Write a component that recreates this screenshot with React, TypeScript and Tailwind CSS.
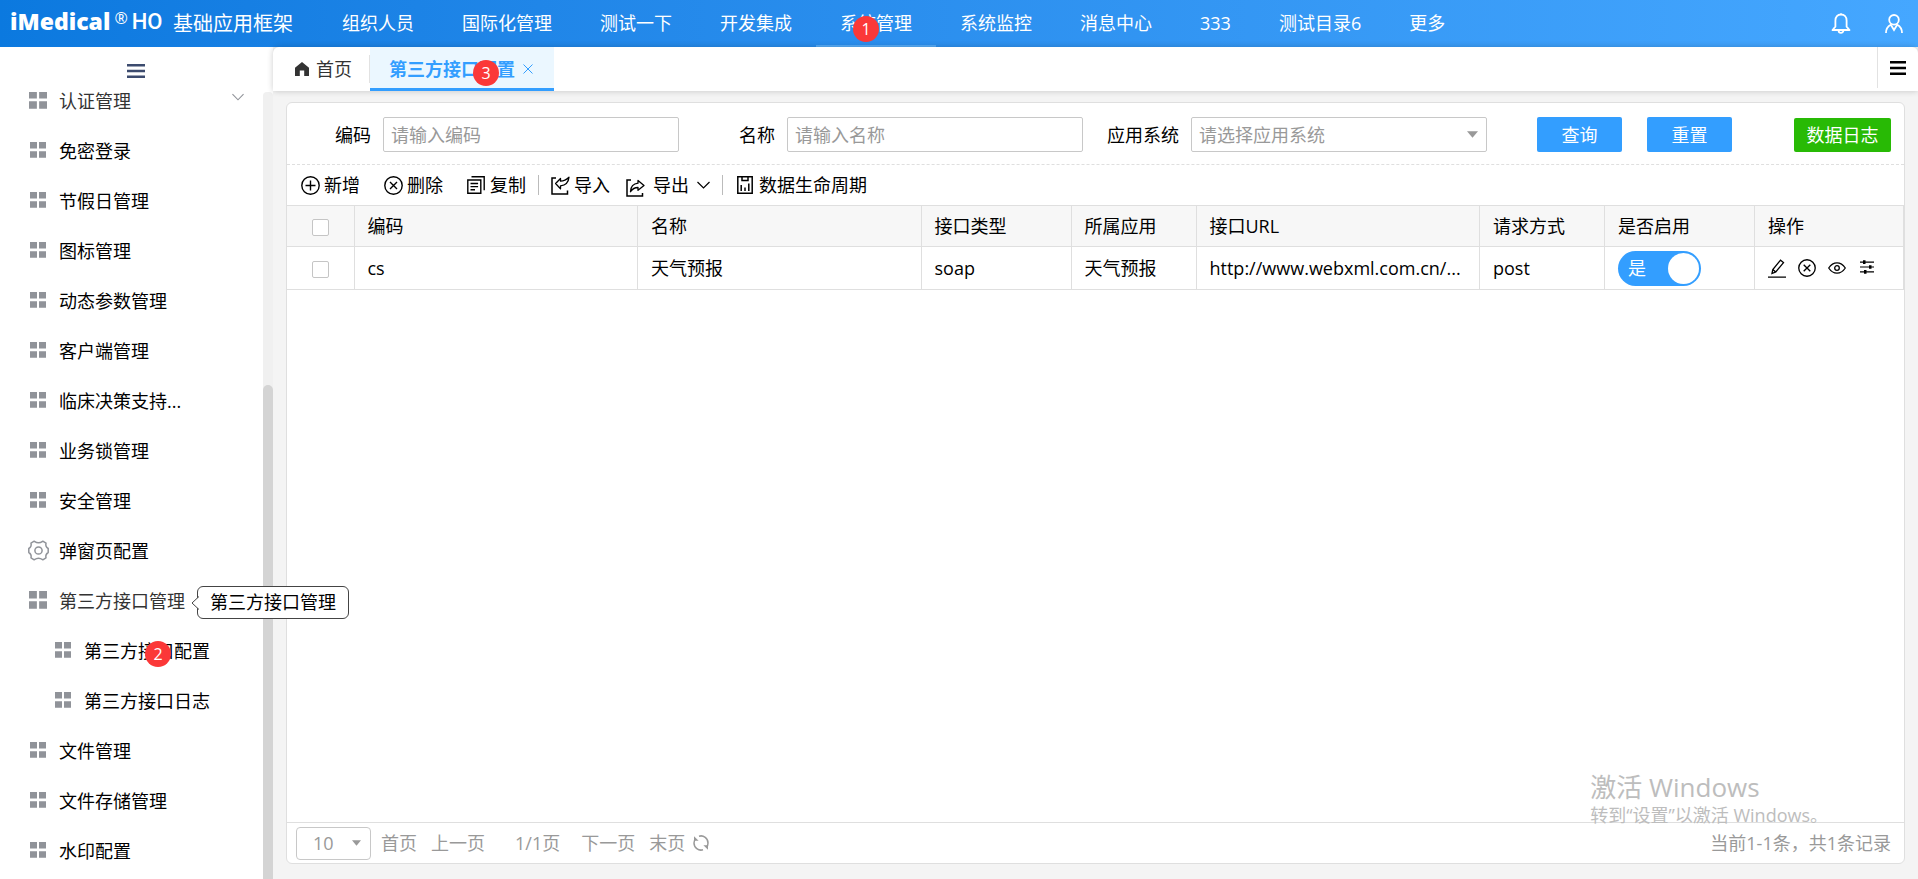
import { useState, ReactNode } from 'react';

type MenuItem = {
  name: string;
  icon?: 'grid' | 'gear';
  big?: boolean;
  arrow?: boolean;
  child?: boolean;
  badge?: number;
};

const navItems = ['组织人员', '国际化管理', '测试一下', '开发集成', '系统管理', '系统监控', '消息中心', '333', '测试目录6', '更多'];

const menuItems: MenuItem[] = [
  { name: '认证管理', big: true, arrow: true },
  { name: '免密登录' },
  { name: '节假日管理' },
  { name: '图标管理' },
  { name: '动态参数管理' },
  { name: '客户端管理' },
  { name: '临床决策支持...' },
  { name: '业务锁管理' },
  { name: '安全管理' },
  { name: '弹窗页配置', icon: 'gear' },
  { name: '第三方接口管理', big: true },
  { name: '第三方接口配置', child: true, badge: 2 },
  { name: '第三方接口日志', child: true },
  { name: '文件管理' },
  { name: '文件存储管理' },
  { name: '水印配置' },
];

const columns = [
  { title: '编码', width: '' },
  { title: '名称', width: '' },
  { title: '接口类型', width: 'w-[150px]' },
  { title: '所属应用', width: 'w-[125px]' },
  { title: '接口URL', width: '' },
  { title: '请求方式', width: 'w-[125px]' },
  { title: '是否启用', width: 'w-[150px]' },
  { title: '操作', width: 'w-[149px]' },
];

const rows = [
  { code: 'cs', name: '天气预报', type: 'soap', app: '天气预报', url: 'http://www.webxml.com.cn/...', method: 'post' },
];

const GridIcon = ({ big }: { big?: boolean }) => (
  <svg className={big ? 'h-[18px] w-[18px]' : 'h-4 w-4'} viewBox="0 0 16 16" fill="#909399">
    <path d="M0 0h7v6.6H0zM9 0h7v6.6H9zM0 9.2h7v6.6H0zM9 9.2h7v6.6H9z" />
  </svg>
);

const GearIcon = () => (
  <svg className="h-[21px] w-[21px]" viewBox="0 0 21 21" fill="none" stroke="#909399" strokeWidth="1.5" strokeLinejoin="round">
    <path d="M6.2 1.2C7.400 2 8.500 2.800 10.500 2.800S13.600 2 14.800 1.200L18 3.200C17.400 5.500 18.300 7.300 20.200 8.500v4c-1.900 1.200-2.800 3-2.200 5.300l-3.200 2c-1.200-.8-2.300-1.600-4.300-1.600s-3.100.8-4.300 1.600l-3.200-2c.6-2.300-.3-4.100-2.200-5.300v-4C2.700 7.300 3.600 5.500 3 3.200z" />
    <circle cx="10.5" cy="10.5" r="3.6" />
  </svg>
);

const ChevronDown = ({ className }: { className: string }) => (
  <svg className={className} viewBox="0 0 13 8" fill="none" stroke="currentColor" strokeWidth="1.2">
    <path d="M.5 1l6 6 6-6" />
  </svg>
);

const Triangle = ({ className }: { className: string }) => (
  <svg className={className} viewBox="0 0 10 6" fill="#999999">
    <path d="M0 0h10L5 6z" />
  </svg>
);

const CloseCircle = ({ className = 'h-[19px] w-[19px]' }: { className?: string }) => (
  <svg className={className} viewBox="0 0 19 19" fill="none" stroke="currentColor" strokeWidth="1.4">
    <circle cx="9.5" cy="9.5" r="8.7" />
    <path d="M6 6l7 7M13 6l-7 7" />
  </svg>
);

const Badge = ({ value, className }: { value: number; className: string }) => (
  <span className={`absolute flex h-[26px] w-[26px] items-center justify-center rounded-full bg-[#fb3838] text-base leading-none font-normal text-white ${className}`}>
    {value}
  </span>
);

const ToolButton = ({ icon, children, className = '' }: { icon: ReactNode; children: ReactNode; className?: string }) => (
  <button type="button" className={`flex items-center gap-1 ${className}`}>
    {icon}
    {children}
  </button>
);

const Field = ({ id, label, labelWidth, children }: { id: string; label: string; labelWidth: string; children: ReactNode }) => (
  <div className="flex items-center gap-3">
    <label htmlFor={id} className={`text-right whitespace-nowrap ${labelWidth}`}>
      {label}
    </label>
    {children}
  </div>
);

const Header = () => (
  <header className="flex h-[47px] shrink-0 items-center bg-linear-to-r from-[#0b79df] to-[#45a7ff] text-white">
    <div className="flex w-[173px] shrink-0 items-center pb-1 pl-[10px] leading-none">
      <span className="text-[23px] leading-none font-extrabold">iMedical</span>
      <span className="ml-1 self-start text-base leading-none">®</span>
      <span className="ml-1 font-[Roboto,sans-serif] text-[22px] leading-none font-medium">HO</span>
    </div>
    <h1 className="w-[145px] shrink-0 text-xl whitespace-nowrap">基础应用框架</h1>
    <nav className="flex flex-1">
      {navItems.map((item) => (
        <a
          key={item}
          href="#"
          className={`relative flex h-[47px] items-center border-b-2 px-6 whitespace-nowrap ${item === '系统管理' ? 'border-[#55abf8]' : 'border-transparent'}`}
        >
          {item}
          {item === '系统管理' && <Badge value={1} className="top-4 left-[37px]" />}
        </a>
      ))}
    </nav>
    <div className="flex items-center gap-[34px] pr-[15px]">
      <button type="button" aria-label="消息">
        <svg className="h-[21px] w-5" viewBox="0 0 20 21" fill="none" stroke="white" strokeWidth="1.8" strokeLinejoin="round">
          <path d="M10 1.5c-3.400 0-5.600 2.500-5.600 6v6.200L1.500 17h17l-2.900-3.300V7.500c0-3.500-2.200-6-5.600-6zM10 .2v1.300" />
          <path d="M7.600 17.500a2.400 2.400 0 0 0 4.800 0" />
        </svg>
      </button>
      <button type="button" aria-label="用户">
        <svg className="h-5 w-[18px]" viewBox="0 0 18 20" fill="none" stroke="white" strokeWidth="1.8">
          <circle cx="9" cy="5.8" r="4.8" />
          <path d="M1 19c0-3.600 1.800-6.600 4.800-8.200L9 16l3.200-5.200c3 1.600 4.800 4.600 4.800 8.200" />
        </svg>
      </button>
    </div>
  </header>
);

const Sidebar = () => (
  <aside className="relative flex w-[273px] shrink-0 flex-col bg-white">
    <div className="flex h-[45px] shrink-0 items-center pt-[2px] pl-[127px]">
      <button type="button" aria-label="折叠菜单">
        <svg className="h-[14px] w-[18px]" viewBox="0 0 18 14" fill="#3c4b6e">
          <path d="M0 0h18v2.600H0zM0 5.700h18v2.600H0zM0 11.400h18V14H0z" />
        </svg>
      </button>
    </div>
    <div className="flex min-h-0 flex-1 overflow-hidden">
      <ul className="-mt-4 flex-1">
        {menuItems.map((item) => (
          <li key={item.name} className="relative">
            <a href="#" className={`flex h-[50px] items-center ${item.child ? 'pl-[52px]' : 'pl-[27px]'} ${item.big ? 'text-[#333333]' : ''}`}>
              <span className="mr-[10px] mb-[2px] flex w-[22px] justify-center">{item.icon === 'gear' ? <GearIcon /> : <GridIcon big={item.big} />}</span>
              {item.name}
              {item.arrow && <ChevronDown className="mr-[19px] mb-2 ml-auto h-2 w-3 text-[#909399]" />}
            </a>
            {item.badge && <Badge value={item.badge} className="top-[15px] left-[145px]" />}
          </li>
        ))}
      </ul>
      <div className="flex w-[10px] flex-col rounded-t bg-[#f0f0f0]">
        <div className="mt-[293px] flex-1 rounded-t-full bg-[#d4d4d4]" />
      </div>
    </div>
    <div role="tooltip" className="absolute top-[539px] left-[197px] z-10 rounded-md border border-[#444444] bg-white px-3 leading-[31px] whitespace-nowrap">
      <svg className="absolute top-[9px] -left-[7px] h-[14px] w-2" viewBox="0 0 8 14" fill="white" stroke="#444444">
        <path d="M8 .5L1 7l7 6.500" />
      </svg>
      第三方接口管理
    </div>
  </aside>
);

const TabBar = () => (
  <div className="z-[1] flex h-[44px] shrink-0 rounded-t-md bg-white shadow-[0_0_6px_rgba(0,0,0,0.2)]">
    <button type="button" className="my-2 flex items-center border-r border-[#e2e2e2] pr-[17px] pl-[22px]">
      <svg className="mr-[7px] h-[14px] w-[14px]" viewBox="0 0 14 14" fill="#333333">
        <path d="M7 0L0 5.800V14h4.800V8.500h4.400V14H14V5.800z" />
      </svg>
      <span className="text-[#333333]">首页</span>
    </button>
    <div className="relative flex w-[184px] items-center border-b-[3px] border-[#339eff] bg-[#ebf7ff] pt-[3px] pl-[19px] text-[#339eff]">
      <span className="font-bold">第三方接口配置</span>
      <button type="button" aria-label="关闭" className="ml-2">
        <svg className="h-[10px] w-[10px]" viewBox="0 0 10 10" fill="none" stroke="currentColor">
          <path d="M.5.5l9 9M9.500.5l-9 9" />
        </svg>
      </button>
      <Badge value={3} className="top-[13px] left-[103px]" />
    </div>
    <button type="button" aria-label="更多标签" className="mb-[3px] ml-auto w-[41px] border-l border-[#e2e2e2] pl-3">
      <svg className="h-[14px] w-4" viewBox="0 0 16 14" fill="black">
        <path d="M0 0h16v2.600H0zM0 5.700h16v2.600H0zM0 11.400h16V14H0z" />
      </svg>
    </button>
  </div>
);

const SearchForm = () => (
  <form onSubmit={(e) => e.preventDefault()} className="flex items-center border-b border-dashed border-[#dfdfdf] pt-[14px] pb-3">
    <Field id="code" label="编码" labelWidth="w-21">
      <input id="code" type="text" placeholder="请输入编码" className="h-[35px] w-[296px] rounded-xs border border-[#c8c8c8] px-[7px] placeholder:text-[#999999]" />
    </Field>
    <Field id="name" label="名称" labelWidth="w-24">
      <input id="name" type="text" placeholder="请输入名称" className="h-[35px] w-[296px] rounded-xs border border-[#c8c8c8] px-[7px] placeholder:text-[#999999]" />
    </Field>
    <Field id="system" label="应用系统" labelWidth="w-24">
      <div className="relative">
        <select id="system" className="h-[35px] w-[296px] appearance-none rounded-xs border border-[#c8c8c8] px-[7px] text-[#999999]">
          <option>请选择应用系统</option>
        </select>
        <Triangle className="pointer-events-none absolute top-[14px] right-[9px] h-[7px] w-[11px]" />
      </div>
    </Field>
    <button type="submit" className="ml-[50px] h-[35px] w-[85px] rounded-xs bg-[#339eff] text-white">
      查询
    </button>
    <button type="reset" className="ml-[25px] h-[35px] w-[85px] rounded-xs bg-[#339eff] text-white">
      重置
    </button>
    <button type="button" className="mr-[13px] ml-auto h-[34px] w-[97px] rounded-xs bg-[#28ba05] text-white">
      数据日志
    </button>
  </form>
);

const Toolbar = () => (
  <div className="flex h-[40px] shrink-0 items-center pl-[14px] whitespace-nowrap">
    <ToolButton
      icon={
        <svg className="h-[19px] w-[19px]" viewBox="0 0 19 19" fill="none" stroke="currentColor" strokeWidth="1.4">
          <circle cx="9.5" cy="9.5" r="8.7" />
          <path d="M9.500 4.500v10M4.500 9.500h10" />
        </svg>
      }
    >
      新增
    </ToolButton>
    <ToolButton className="ml-6" icon={<CloseCircle />}>
      删除
    </ToolButton>
    <ToolButton
      className="ml-6"
      icon={
        <svg className="mr-px h-[18px] w-[18px]" viewBox="0 0 18 18" fill="none" stroke="currentColor" strokeWidth="1.4">
          <path d="M4.500.8H17.200v13.400M.8 4h13v13.200H.8zM3.500 7.500h7.600M3.500 10.600h7.600M3.500 13.700h4.500" />
        </svg>
      }
    >
      复制
    </ToolButton>
    <span className="ml-3 h-5 border-l border-[#bbbbbb]" />
    <ToolButton
      className="ml-3"
      icon={
        <svg className="h-[19px] w-[19px]" viewBox="0 0 19 19" fill="none" stroke="currentColor" strokeWidth="1.5">
          <path d="M5 2H1v16h15.500v-3.500" />
          <path d="M4.600 7.500L9.500 2.500v2.700c3.300-.1 6-1.500 8.500-4-.4 4.500-3.400 8-8.500 8.700v3z" strokeWidth="1.3" strokeLinejoin="round" />
        </svg>
      }
    >
      导入
    </ToolButton>
    <ToolButton
      className="ml-4"
      icon={
        <svg className="mt-1 mr-1 h-[19px] w-[19px]" viewBox="0 0 19 19" fill="none" stroke="currentColor" strokeWidth="1.5">
          <path d="M5 2H1v16h15.500v-3" />
          <path d="M12 2.500l6 5-6 4.800V9.500c-3 0-5.600 1.400-7.500 4.200.2-4.700 3-8 7.500-8.500z" strokeWidth="1.3" strokeLinejoin="round" />
        </svg>
      }
    >
      导出
      <ChevronDown className="ml-1 h-2 w-[13px]" />
    </ToolButton>
    <span className="ml-3 h-5 border-l border-[#bbbbbb]" />
    <ToolButton
      className="ml-[14px]"
      icon={
        <svg className="mr-[2px] h-[18px] w-4" viewBox="0 0 16 18" fill="none" stroke="currentColor" strokeWidth="1.5">
          <path d="M.8.8h14.400v16.400H.8zM5 1v3.500h6V1M4.200 9v6M8 11.500V15M11.800 7.500V15" />
        </svg>
      }
    >
      数据生命周期
    </ToolButton>
  </div>
);

const Checkbox = ({ label }: { label: string }) => (
  <input type="checkbox" aria-label={label} className="mx-auto mt-[2px] block h-[17px] w-[17px] appearance-none rounded-xs border border-[#c5c5c5] bg-white checked:bg-[#339eff]" />
);

const RowActions = () => (
  <div className="flex items-center">
    <button type="button" aria-label="编辑">
      <svg className="h-[19px] w-[18px]" viewBox="0 0 18 19" fill="none" stroke="currentColor" strokeWidth="1.3">
        <path d="M0 18.200h18M4 14.500l.8-4L12.500 1.200l3 2.400-7.700 9.300zM4.800 10.500l3 2.400" />
      </svg>
    </button>
    <button type="button" aria-label="删除" className="ml-3">
      <CloseCircle className="h-[18px] w-[18px]" />
    </button>
    <button type="button" aria-label="查看" className="ml-3">
      <svg className="h-3 w-[18px]" viewBox="0 0 18 12" fill="none" stroke="currentColor" strokeWidth="1.3">
        <path d="M.7 6C3 2.500 6 .8 9 .8S15 2.500 17.300 6C15 9.500 12 11.200 9 11.200S3 9.500.7 6z" />
        <circle cx="9" cy="6" r="2.3" />
      </svg>
    </button>
    <button type="button" aria-label="设置" className="ml-[14px]">
      <svg className="mb-[2px] h-[14px] w-[14px]" viewBox="0 0 14 14" fill="currentColor">
        <path d="M0 1.500h14v1.200H0zM0 6.400h14v1.200H0zM0 11.300h14v1.200H0zM3 .3h2.500v3.600H3zM9 5.200h2.500v3.600H9zM4 10.100h2.500v3.600H4z" />
      </svg>
    </button>
  </div>
);

const DataTable = () => {
  const [enabled, setEnabled] = useState<boolean>(true);

  return (
    <table className="w-full table-fixed border-collapse border-y border-[#dfdfdf]">
      <thead>
        <tr className="h-[41px] border-b border-[#dfdfdf] bg-[#f7f7f7]">
          <th className="w-[67px] border-r border-[#dfdfdf]">
            <Checkbox label="全选" />
          </th>
          {columns.map((col) => (
            <th key={col.title} className={`border-r border-[#dfdfdf] px-[13px] text-left font-normal ${col.width}`}>
              {col.title}
            </th>
          ))}
        </tr>
      </thead>
      <tbody>
        {rows.map((row) => (
          <tr key={row.code} className="h-[43px]">
            <td className="border-r border-[#dfdfdf]">
              <Checkbox label={row.code} />
            </td>
            {[row.code, row.name, row.type, row.app, row.url, row.method].map((text, index) => (
              <td key={index} className="truncate border-r border-[#dfdfdf] px-[13px]">
                {text}
              </td>
            ))}
            <td className="border-r border-[#dfdfdf] px-[13px]">
              <label className="flex h-[35px] w-[83px] items-center justify-between rounded-full bg-[#339eff] pr-[2px] pl-[10px] text-white">
                <input type="checkbox" role="switch" className="sr-only" checked={enabled} onChange={(e) => setEnabled(e.target.checked)} />
                {enabled ? '是' : '否'}
                <span className="h-[31px] w-[31px] rounded-full bg-white" />
              </label>
            </td>
            <td className="border-r border-[#dfdfdf] px-[13px]">
              <RowActions />
            </td>
          </tr>
        ))}
      </tbody>
    </table>
  );
};

const Pager = () => (
  <div className="flex h-[41px] shrink-0 items-center border-t border-[#dfdfdf] pr-[13px] pl-[9px] text-[#999999]">
    <div className="relative">
      <select aria-label="每页条数" className="h-[33px] w-[75px] appearance-none rounded-sm border border-[#c8c8c8] pl-4">
        <option>10</option>
      </select>
      <Triangle className="pointer-events-none absolute top-[13px] right-[10px] h-[6px] w-[9px]" />
    </div>
    <button type="button" className="ml-[10px]">
      首页
    </button>
    <button type="button" className="ml-[14px]">
      上一页
    </button>
    <span className="ml-[30px]">1/1页</span>
    <button type="button" className="ml-[21px]">
      下一页
    </button>
    <button type="button" className="ml-[14px]">
      末页
    </button>
    <button type="button" aria-label="刷新" className="ml-2">
      <svg className="h-4 w-4" viewBox="0 0 16 16" fill="none" stroke="#999999" strokeWidth="1.5">
        <path d="M6 1.200a7 7 0 0 1 9 6.800M10 14.800A7 7 0 0 1 1 8M1 8c0-1.500.5-3 1.500-4.200M15 8c0 1.500-.5 3-1.500 4.200" />
        <path d="M1 1.200v4.600h4.600zM15 14.800v-4.600h-4.600z" fill="#999999" stroke="none" />
      </svg>
    </button>
    <span className="ml-auto">当前1-1条，共1条记录</span>
  </div>
);

const App = () => {
  return (
    <div className="flex h-screen flex-col bg-[#f4f4f4] font-['Open_Sans','Noto_Sans_CJK_SC',sans-serif] text-lg leading-6 text-black">
      <Header />
      <div className="flex min-h-0 flex-1">
        <Sidebar />
        <main className="flex min-w-0 flex-1 flex-col">
          <TabBar />
          <section className="mx-[13px] mt-[11px] mb-[15px] flex min-h-0 flex-1 flex-col overflow-hidden rounded-md border border-[#dfdfdf] bg-white">
            <SearchForm />
            <Toolbar />
            <div className="min-h-0 flex-1">
              <DataTable />
            </div>
            <Pager />
          </section>
        </main>
      </div>
      <div className="pointer-events-none absolute right-[90px] bottom-[52px] text-[#bdbdbd]">
        <p className="text-[26px] leading-8">激活 Windows</p>
        <p className="leading-6">转到“设置”以激活 Windows。</p>
      </div>
    </div>
  );
};

export default App;
